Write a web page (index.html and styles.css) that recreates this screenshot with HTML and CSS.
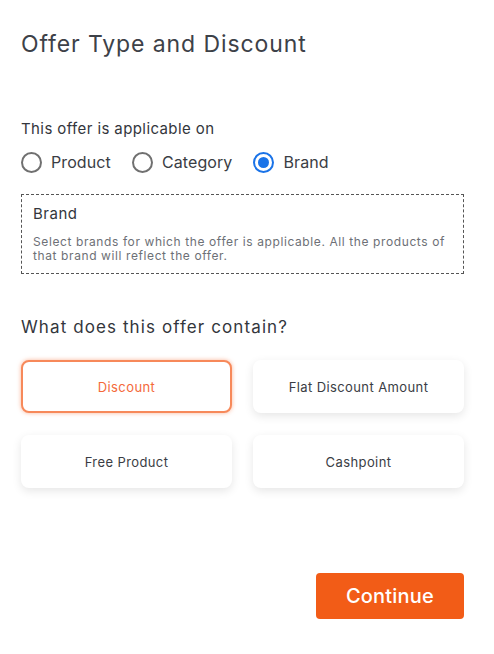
FILE: index.html
```html
<!DOCTYPE html>
<html lang="en">
<head>
<meta charset="utf-8">
<title>Offer Type and Discount</title>
<link rel="stylesheet" href="styles.css">
</head>
<body>
<main class="page">
  <h1 class="title">Offer Type and Discount</h1>

  <p class="label">This offer is applicable on</p>
  <div class="radios">
    <label class="radio"><span class="dot"></span><span>Product</span></label>
    <label class="radio"><span class="dot"></span><span>Category</span></label>
    <label class="radio checked"><span class="dot"></span><span>Brand</span></label>
  </div>

  <section class="info">
    <h2 class="info-title">Brand</h2>
    <p class="info-desc">Select brands for which the offer is applicable. All the products of that brand will reflect the offer.</p>
  </section>

  <h2 class="heading">What does this offer contain?</h2>
  <div class="cards">
    <button class="card active">Discount</button>
    <button class="card">Flat Discount Amount</button>
    <button class="card">Free Product</button>
    <button class="card">Cashpoint</button>
  </div>

  <div class="actions">
    <button class="continue">Continue</button>
  </div>
</main>
</body>
</html>
```
FILE: styles.css
```css
* { box-sizing: border-box; }
html, body { margin: 0; padding: 0; background: #fff; }
body {
  font-family: Inter, "Open Sans", "Liberation Sans", sans-serif;
  color: #3a3d44;
}
.page {
  width: 494px;
  padding: 30px 30px 0 21px;
}
.title {
  margin: 0;
  font-size: 23px;
  line-height: 28px;
  letter-spacing: 0.9px;
  font-weight: 400;
  color: #3d4148;
}
.label {
  margin: 61px 0 0;
  font-size: 15px;
  line-height: 20px;
  letter-spacing: 0.4px;
  color: #33363c;
}
.radios {
  margin-top: 11px;
  display: flex;
  gap: 21px;
  height: 24px;
  align-items: center;
}
.radio {
  display: flex;
  align-items: center;
  gap: 9px;
  font-size: 16px;
  letter-spacing: 0.1px;
  color: #3a3d44;
}
.dot {
  width: 21px;
  height: 21px;
  border: 2px solid #707070;
  border-radius: 50%;
  display: flex;
  align-items: center;
  justify-content: center;
}
.radio.checked .dot { border-color: #1a73e8; }
.radio.checked .dot::after {
  content: "";
  width: 11px;
  height: 11px;
  border-radius: 50%;
  background: #1a73e8;
}
.info {
  margin-top: 20px;
  width: 443px;
  border: 1px dashed #555;
  padding: 9px 11px 10px;
}
.info-title {
  margin: 0;
  font-size: 15px;
  line-height: 20px;
  letter-spacing: 0.5px;
  font-weight: 400;
  color: #33363c;
}
.info-desc {
  margin: 11px 0 0;
  font-size: 12px;
  line-height: 14px;
  letter-spacing: 0.6px;
  color: #6d7076;
}
.heading {
  margin: 42px 0 0;
  font-size: 17px;
  line-height: 22px;
  letter-spacing: 1.1px;
  font-weight: 400;
  color: #33363c;
}
.cards {
  margin-top: 22px;
  width: 443px;
  display: grid;
  grid-template-columns: 211px 211px;
  grid-auto-rows: 53px;
  column-gap: 21px;
  row-gap: 22px;
}
.card {
  border: 0;
  border-radius: 8px;
  background: #fff;
  box-shadow: 0 3px 10px rgba(0, 0, 0, 0.1);
  font-family: inherit;
  font-size: 13px;
  letter-spacing: 0.4px;
  color: #3a3d44;
}
.card.active {
  border: 2px solid #f7895a;
  box-shadow: 0 0 4px rgba(245, 120, 70, 0.55);
  color: #f4693a;
}
.actions {
  margin-top: 85px;
  width: 443px;
  display: flex;
  justify-content: flex-end;
}
.continue {
  width: 148px;
  height: 46px;
  border: 0;
  border-radius: 4px;
  background: #f25c17;
  color: #fff;
  font-family: inherit;
  font-size: 20px;
  letter-spacing: 0.2px;
  font-weight: 500;
}
```
